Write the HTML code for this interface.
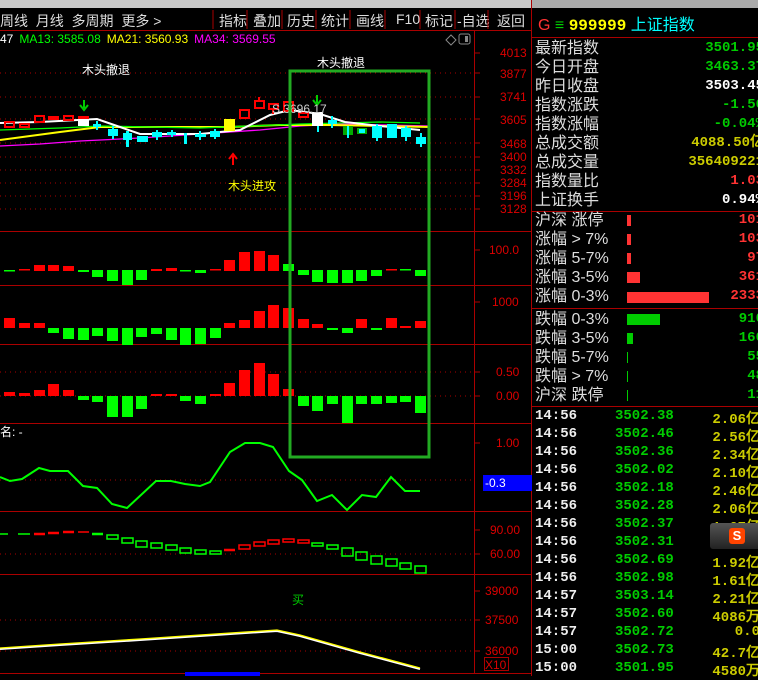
<!DOCTYPE html>
<html><head><meta charset="utf-8"><style>
body{margin:0;width:758px;height:676px;background:#000;overflow:hidden;font-family:"Liberation Sans","Noto Sans CJK SC",sans-serif;position:relative}
.a{position:absolute;white-space:nowrap}
.r{position:absolute;left:535px;width:223px;height:19px;font-size:16px;line-height:19px;color:#ddd;font-family:"Liberation Sans","WenQuanYi Zen Hei",sans-serif}
.r b{position:absolute;right:-6px;top:0;font-weight:bold;font-family:"Liberation Mono",monospace;font-size:14px}
.t{position:absolute;left:535px;width:223px;height:18px;font-size:14px;font-weight:bold;font-family:"Liberation Mono",monospace}
.t span{position:absolute}
</style></head><body>
<div class="a" style="left:0;top:0;width:758px;height:8px;background:#c8c8c8"></div>
<div class="a" style="left:0;top:8px;width:532px;height:22px;background:#000;border-bottom:1px solid #a00"></div>
<div class="a" style="left:0;top:11px;font-size:14px;color:#ddd">周线&nbsp;&nbsp;月线&nbsp;&nbsp;多周期&nbsp;&nbsp;更多 &gt;</div>
<div class="a" style="left:213px;top:11px;font-size:14px;color:#ddd;word-spacing:0">
<span style="position:absolute;left:6px">指标</span><span style="position:absolute;left:40px">叠加</span><span style="position:absolute;left:74px">历史</span><span style="position:absolute;left:108px">统计</span><span style="position:absolute;left:143px">画线</span><span style="position:absolute;left:183px">F10</span><span style="position:absolute;left:212px">标记</span><span style="position:absolute;left:244px">-自选</span><span style="position:absolute;left:284px">返回</span></div>
<svg class="a" style="left:0;top:0" width="532" height="676">
<g stroke="#a00" stroke-width="1">
<line x1="213" y1="10" x2="213" y2="29"/><line x1="247" y1="10" x2="247" y2="29"/><line x1="282" y1="10" x2="282" y2="29"/><line x1="316" y1="10" x2="316" y2="29"/><line x1="350" y1="10" x2="350" y2="29"/><line x1="385" y1="10" x2="385" y2="29"/><line x1="420" y1="10" x2="420" y2="29"/><line x1="455" y1="10" x2="455" y2="29"/><line x1="488" y1="10" x2="488" y2="29"/>
<line x1="474.5" y1="30" x2="474.5" y2="673"/>
<line x1="0" y1="231.5" x2="532" y2="231.5"/><line x1="0" y1="285.5" x2="532" y2="285.5"/><line x1="0" y1="344.5" x2="532" y2="344.5"/><line x1="0" y1="423.5" x2="532" y2="423.5"/><line x1="0" y1="511.5" x2="532" y2="511.5"/><line x1="0" y1="574.5" x2="532" y2="574.5"/><line x1="0" y1="673.5" x2="532" y2="673.5"/>
<line x1="531.5" y1="0" x2="531.5" y2="676"/>
</g>
<g stroke="#a00" stroke-dasharray="1 4">
<line x1="0" y1="73" x2="474" y2="73"/><line x1="0" y1="97" x2="474" y2="97"/><line x1="0" y1="119" x2="474" y2="119"/><line x1="0" y1="143" x2="474" y2="143"/><line x1="0" y1="157" x2="474" y2="157"/><line x1="0" y1="170" x2="474" y2="170"/><line x1="0" y1="183" x2="474" y2="183"/><line x1="0" y1="196" x2="474" y2="196"/><line x1="0" y1="209" x2="474" y2="209"/>
<line x1="0" y1="372" x2="474" y2="372"/><line x1="0" y1="396" x2="474" y2="396"/><line x1="0" y1="480" x2="474" y2="480"/><line x1="0" y1="554" x2="474" y2="554"/><line x1="0" y1="620" x2="474" y2="620"/><line x1="0" y1="651" x2="474" y2="651"/>
</g>
<g stroke="#a00"><line x1="474" y1="53" x2="480" y2="53"/><line x1="474" y1="73" x2="480" y2="73"/><line x1="474" y1="97" x2="480" y2="97"/><line x1="474" y1="119" x2="480" y2="119"/><line x1="474" y1="143" x2="480" y2="143"/><line x1="474" y1="157" x2="480" y2="157"/><line x1="474" y1="170" x2="480" y2="170"/><line x1="474" y1="183" x2="480" y2="183"/><line x1="474" y1="196" x2="480" y2="196"/><line x1="474" y1="209" x2="480" y2="209"/><line x1="474" y1="250" x2="480" y2="250"/><line x1="474" y1="302" x2="480" y2="302"/><line x1="474" y1="372" x2="480" y2="372"/><line x1="474" y1="396" x2="480" y2="396"/><line x1="474" y1="443" x2="480" y2="443"/><line x1="474" y1="530" x2="480" y2="530"/><line x1="474" y1="554" x2="480" y2="554"/><line x1="474" y1="591" x2="480" y2="591"/><line x1="474" y1="620" x2="480" y2="620"/><line x1="474" y1="651" x2="480" y2="651"/></g>
<g fill="#d00" font-family="Liberation Sans,sans-serif" font-size="12">
<text x="500" y="57">4013</text><text x="500" y="78">3877</text><text x="500" y="101">3741</text><text x="500" y="124">3605</text><text x="500" y="148">3468</text><text x="500" y="161">3400</text><text x="500" y="174">3332</text><text x="500" y="187">3284</text><text x="500" y="200">3196</text><text x="500" y="213">3128</text>
<text x="489" y="254">100.0</text><text x="492" y="306">1000</text><text x="496" y="376">0.50</text><text x="496" y="400">0.00</text><text x="496" y="447">1.00</text><text x="490" y="534">90.00</text><text x="490" y="558">60.00</text><text x="485" y="595">39000</text><text x="485" y="624">37500</text><text x="485" y="655">36000</text>
</g>
<rect x="483" y="475" width="49" height="16" fill="#0000ff"/><text x="485" y="487" fill="#fff" font-size="12" font-family="Liberation Sans">-0.3</text>
<rect x="484.5" y="657.5" width="24" height="13" fill="none" stroke="#a00"/><text x="485" y="669" fill="#d00" font-size="12" font-family="Liberation Sans">X10</text>
<rect x="185" y="672" width="75" height="4" fill="#00f"/>
<text x="0" y="43" font-size="12" font-family="Liberation Sans"><tspan fill="#fff">47</tspan><tspan fill="#0f0" dx="6">MA13: 3585.08</tspan><tspan fill="#ff0" dx="6">MA21: 3560.93</tspan><tspan fill="#f0f" dx="6">MA34: 3569.55</tspan></text>
<path d="M446 40 l5 -5 l5 5 l-5 5z" fill="none" stroke="#888"/><rect x="459" y="34" width="11" height="10" rx="2" fill="none" stroke="#888"/><rect x="465" y="36" width="3" height="6" fill="#888"/>
<polyline points="0,146 40,144 80,141 140,138 200,134 260,130 300,126 340,124 430,126" fill="none" stroke="#f0f" stroke-width="1.3"/>
<polyline points="0,140 30,136 60,132 100,127 150,127 230,127 280,125 330,125 430,127" fill="none" stroke="#ff0" stroke-width="2"/>
<polyline points="0,130 60,128 100,126 200,128 300,124 380,122 420,123" fill="none" stroke="#0f0" stroke-width="1.3"/>
<polyline points="0,123 40,122 97,119 120,127 140,134 200,134 240,130 270,115 290,110 320,114 345,122 380,126 420,130" fill="none" stroke="#fff" stroke-width="2"/>
<g stroke="#f00" stroke-width="2" fill="none">
<rect x="5" y="122" width="9" height="5"/><rect x="20" y="124" width="9" height="3"/><rect x="35" y="116" width="9" height="6"/><rect x="49" y="117" width="9" height="2"/><rect x="64" y="116" width="9" height="4"/><rect x="240" y="110" width="9" height="8"/><rect x="255" y="101" width="9" height="7"/><rect x="269" y="104" width="9" height="5"/><rect x="284" y="102" width="9" height="9"/><rect x="299" y="113" width="9" height="4"/>
<line x1="259" y1="97" x2="259" y2="101"/><line x1="273" y1="109" x2="273" y2="114"/>
</g>
<rect x="78" y="116" width="11" height="10" fill="#fff"/><rect x="78" y="116" width="11" height="3" fill="#f00"/>
<rect x="312" y="112" width="11" height="14" fill="#fff"/><rect x="317" y="126" width="2" height="6" fill="#0ff"/>
<rect x="224" y="119" width="11" height="12" fill="#ff0"/>
<g fill="#0ff">
<rect x="93" y="124" width="8" height="3"/><rect x="96" y="121" width="2" height="9"/>
<rect x="108" y="129" width="10" height="7"/><rect x="112" y="126" width="2" height="13"/>
<rect x="123" y="133" width="9" height="7"/><rect x="126" y="131" width="3" height="16"/>
<rect x="137" y="136" width="11" height="6"/>
<rect x="152" y="132" width="10" height="5"/><rect x="156" y="130" width="2" height="10"/>
<rect x="167" y="132" width="9" height="3"/><rect x="171" y="130" width="2" height="7"/>
<rect x="184" y="133" width="3" height="11"/>
<rect x="195" y="134" width="11" height="3"/><rect x="199" y="131" width="2" height="9"/>
<rect x="210" y="131" width="10" height="6"/><rect x="214" y="129" width="2" height="10"/>
<rect x="328" y="120" width="9" height="4"/><rect x="331" y="116" width="2" height="12"/>
<rect x="343" y="126" width="10" height="9" fill="#0a0"/><rect x="347" y="126" width="2" height="12"/>
<rect x="357" y="128" width="10" height="6" fill="#0a0"/><rect x="359" y="129" width="6" height="4"/>
<rect x="372" y="126" width="10" height="12"/><rect x="376" y="124" width="2" height="17"/>
<rect x="387" y="124" width="10" height="14"/>
<rect x="401" y="128" width="10" height="9"/><rect x="405" y="126" width="2" height="15"/>
<rect x="416" y="137" width="10" height="7"/><rect x="420" y="133" width="2" height="14"/>
</g>
<path d="M84 100 v8 M80 105 l4 5 l4 -5" stroke="#0c0" stroke-width="2" fill="none"/>
<path d="M317 95 v8 M313 100 l4 5 l4 -5" stroke="#0c0" stroke-width="2" fill="none"/>
<path d="M233 165 v-9 M229 159 l4 -5 l4 5" stroke="#f00" stroke-width="2" fill="none"/>
<g font-size="12" font-family="Liberation Sans,WenQuanYi Zen Hei,sans-serif">
<text x="82" y="74" fill="#fff">木头撤退</text><text x="317" y="67" fill="#fff">木头撤退</text><text x="228" y="190" fill="#ff0">木头进攻</text><text x="272" y="113" fill="#ccc">S 3696.17</text>
<text x="0" y="436" fill="#fff">名: -</text><text x="292" y="604" fill="#0c0">买</text>
</g>
<g fill="#f00">
<rect x="19" y="269" width="11" height="1.5"/><rect x="34" y="265" width="11" height="6"/><rect x="48" y="265" width="11" height="6"/><rect x="63" y="266" width="11" height="5"/><rect x="151" y="269" width="11" height="2"/><rect x="166" y="268" width="11" height="3"/><rect x="210" y="269" width="11" height="1.5"/><rect x="224" y="260" width="11" height="11"/><rect x="239" y="252" width="11" height="19"/><rect x="254" y="251" width="11" height="20"/><rect x="268" y="255" width="11" height="16"/><rect x="386" y="269" width="11" height="1.5"/>
</g>
<g fill="#0f0">
<rect x="4" y="270" width="11" height="1.5"/><rect x="78" y="270" width="11" height="2"/><rect x="92" y="270" width="11" height="7"/><rect x="107" y="270" width="11" height="11"/><rect x="122" y="270" width="11" height="15"/><rect x="136" y="270" width="11" height="10"/><rect x="180" y="270" width="11" height="1.5"/><rect x="195" y="270" width="11" height="3"/><rect x="283" y="264" width="11" height="7"/><rect x="298" y="270" width="11" height="5"/><rect x="312" y="270" width="11" height="12"/><rect x="327" y="270" width="11" height="13"/><rect x="342" y="270" width="11" height="13"/><rect x="356" y="270" width="11" height="11"/><rect x="371" y="270" width="11" height="6"/><rect x="400" y="269" width="11" height="1.5"/><rect x="415" y="270" width="11" height="6"/>
</g>
<g fill="#f00">
<rect x="4" y="318" width="11" height="10"/><rect x="19" y="323" width="11" height="5"/><rect x="34" y="323" width="11" height="5"/><rect x="224" y="323" width="11" height="5"/><rect x="239" y="320" width="11" height="8"/><rect x="254" y="311" width="11" height="17"/><rect x="268" y="305" width="11" height="23"/><rect x="283" y="308" width="11" height="20"/><rect x="298" y="319" width="11" height="9"/><rect x="312" y="324" width="11" height="4"/><rect x="356" y="319" width="11" height="9"/><rect x="386" y="318" width="11" height="10"/><rect x="400" y="326" width="11" height="2"/><rect x="415" y="321" width="11" height="7"/>
</g>
<g fill="#0f0">
<rect x="48" y="328" width="11" height="5"/><rect x="63" y="328" width="11" height="11"/><rect x="78" y="328" width="11" height="12"/><rect x="92" y="328" width="11" height="8"/><rect x="107" y="328" width="11" height="13"/><rect x="122" y="328" width="11" height="17"/><rect x="136" y="328" width="11" height="9"/><rect x="151" y="328" width="11" height="6"/><rect x="166" y="328" width="11" height="12"/><rect x="180" y="328" width="11" height="17"/><rect x="195" y="328" width="11" height="16"/><rect x="210" y="328" width="11" height="10"/><rect x="327" y="328" width="11" height="2"/><rect x="342" y="328" width="11" height="5"/><rect x="371" y="328" width="11" height="2"/>
</g>
<g fill="#f00">
<rect x="4" y="392" width="11" height="4"/><rect x="19" y="393" width="11" height="3"/><rect x="34" y="390" width="11" height="6"/><rect x="48" y="384" width="11" height="12"/><rect x="63" y="390" width="11" height="6"/><rect x="151" y="394" width="11" height="2"/><rect x="166" y="394" width="11" height="2"/><rect x="210" y="394" width="11" height="2"/><rect x="224" y="383" width="11" height="13"/><rect x="239" y="370" width="11" height="26"/><rect x="254" y="363" width="11" height="33"/><rect x="268" y="374" width="11" height="22"/><rect x="283" y="389" width="11" height="7"/>
</g>
<g fill="#0f0">
<rect x="78" y="396" width="11" height="4"/><rect x="92" y="396" width="11" height="6"/><rect x="107" y="396" width="11" height="21"/><rect x="122" y="396" width="11" height="21"/><rect x="136" y="396" width="11" height="13"/><rect x="180" y="396" width="11" height="5"/><rect x="195" y="396" width="11" height="8"/><rect x="298" y="396" width="11" height="10"/><rect x="312" y="396" width="11" height="15"/><rect x="327" y="396" width="11" height="8"/><rect x="342" y="396" width="11" height="27"/><rect x="356" y="396" width="11" height="8"/><rect x="371" y="396" width="11" height="8"/><rect x="386" y="396" width="11" height="7"/><rect x="400" y="396" width="11" height="6"/><rect x="415" y="396" width="11" height="17"/>
</g>
<polyline points="0,477 10,481 22,479 39,468 50,471 68,471 83,486 97,488 112,504 127,508 156,481 171,481 185,484 200,486 210,482 230,452 245,443 260,443 273,447 289,471 302,480 317,501 332,495 347,510 362,495 376,497 391,477 405,491 420,491" fill="none" stroke="#0f0" stroke-width="2"/>
<g stroke-width="1.5" fill="none">
<g stroke="#0f0"><line x1="0" y1="534" x2="8" y2="534"/><line x1="18" y1="534" x2="30" y2="534"/><line x1="92" y1="534" x2="103" y2="534" stroke-width="2.5"/>
<rect x="107" y="535" width="11" height="4"/><rect x="122" y="538" width="11" height="5"/><rect x="136" y="541" width="11" height="6"/><rect x="151" y="543" width="11" height="5"/><rect x="166" y="545" width="11" height="5"/><rect x="180" y="548" width="11" height="5"/><rect x="195" y="550" width="11" height="4"/><rect x="210" y="551" width="11" height="3"/>
<rect x="312" y="543" width="11" height="3"/><rect x="327" y="545" width="11" height="4"/><rect x="342" y="548" width="11" height="8"/><rect x="356" y="552" width="11" height="8"/><rect x="371" y="556" width="11" height="8"/><rect x="386" y="559" width="11" height="7"/><rect x="400" y="563" width="11" height="6"/><rect x="415" y="566" width="11" height="7"/></g>
<g stroke="#f00"><line x1="34" y1="534" x2="45" y2="534" stroke-width="2.5"/><line x1="48" y1="533" x2="59" y2="533" stroke-width="2.5"/><line x1="63" y1="532" x2="74" y2="532" stroke-width="2.5"/><line x1="78" y1="532" x2="89" y2="532"/><line x1="224" y1="550" x2="235" y2="550" stroke-width="2.5"/>
<rect x="239" y="545" width="11" height="4"/><rect x="254" y="542" width="11" height="4"/><rect x="268" y="540" width="11" height="4"/><rect x="283" y="539" width="11" height="3"/><rect x="298" y="540" width="11" height="3"/></g>
</g>
<polyline points="0,649 60,645 140,640 200,636 277,631 300,636 360,653 420,669" fill="none" stroke="#fff" stroke-width="2"/>
<polyline points="0,648 60,644 140,639 200,635 277,630 300,635 360,652 420,668" fill="none" stroke="#ff0" stroke-width="1.3"/>
<rect x="290" y="71" width="139" height="386" fill="none" stroke="#22aa22" stroke-width="3"/>
</svg>
<div class="a" style="left:532px;top:0;width:226px;height:8px;background:#aaa"></div>
<div class="a" style="left:532px;top:8px;width:226px;height:29px;background:#000;border-bottom:1px solid #a00"></div>
<div class="a" style="left:538px;top:11px;font-size:16px"><span style="color:#f33;font-family:'Liberation Sans'">G</span> <span style="color:#0c0">≡</span> <b style="color:#ff0;font-family:'Liberation Mono'">999999</b> <span style="color:#0ff">上证指数</span></div>
<div class="r" style="top:39px">最新指数<b style="color:#0c0">3501.95</b></div>
<div class="r" style="top:58px">今日开盘<b style="color:#0c0">3463.37</b></div>
<div class="r" style="top:77px">昨日收盘<b style="color:#fff">3503.45</b></div>
<div class="r" style="top:96px">指数涨跌<b style="color:#0c0">-1.50</b></div>
<div class="r" style="top:115px">指数涨幅<b style="color:#0c0">-0.04%</b></div>
<div class="r" style="top:134px">总成交额<b style="color:#cc0">4088.50亿</b></div>
<div class="r" style="top:153px">总成交量<b style="color:#cc0">356409221</b></div>
<div class="r" style="top:172px">指数量比<b style="color:#f33">1.03</b></div>
<div class="r" style="top:191px">上证换手<b style="color:#fff">0.94%</b></div>
<div class="a" style="left:532px;top:211px;width:226px;height:1px;background:#a00"></div>
<div class="r" style="top:211px">沪深 涨停<b style="color:#f33">101</b></div>
<div class="r" style="top:230px">涨幅 &gt; 7%<b style="color:#f33">103</b></div>
<div class="r" style="top:249px">涨幅 5-7%<b style="color:#f33">97</b></div>
<div class="r" style="top:268px">涨幅 3-5%<b style="color:#f33">361</b></div>
<div class="r" style="top:287px">涨幅 0-3%<b style="color:#f33">2333</b></div>
<div class="a" style="left:532px;top:308px;width:226px;height:1px;background:#a00"></div>
<div class="r" style="top:310px">跌幅 0-3%<b style="color:#0c0">910</b></div>
<div class="r" style="top:329px">跌幅 3-5%<b style="color:#0c0">160</b></div>
<div class="r" style="top:348px">跌幅 5-7%<b style="color:#0c0">55</b></div>
<div class="r" style="top:367px">跌幅 &gt; 7%<b style="color:#0c0">48</b></div>
<div class="r" style="top:386px">沪深 跌停<b style="color:#0c0">11</b></div>
<div class="a" style="left:532px;top:406px;width:226px;height:1px;background:#a00"></div>
<div class="a" style="left:627px;top:215px;width:4px;height:11px;background:#f33"></div>
<div class="a" style="left:627px;top:234px;width:4px;height:11px;background:#f33"></div>
<div class="a" style="left:627px;top:253px;width:4px;height:11px;background:#f33"></div>
<div class="a" style="left:627px;top:272px;width:13px;height:11px;background:#f33"></div>
<div class="a" style="left:627px;top:292px;width:82px;height:11px;background:#f33"></div>
<div class="a" style="left:627px;top:314px;width:33px;height:11px;background:#0c0"></div>
<div class="a" style="left:627px;top:333px;width:6px;height:11px;background:#0c0"></div>
<div class="a" style="left:627px;top:352px;width:1px;height:11px;background:#0c0"></div>
<div class="a" style="left:627px;top:371px;width:1px;height:11px;background:#0c0"></div>
<div class="a" style="left:627px;top:390px;width:1px;height:11px;background:#0c0"></div>
<div class="t" style="top:408px"><span style="left:0;color:#eee">14:56</span><span style="left:80px;color:#0c0">3502.38</span><span style="right:-2px;color:#cc0">2.06亿</span></div>
<div class="t" style="top:426px"><span style="left:0;color:#eee">14:56</span><span style="left:80px;color:#0c0">3502.46</span><span style="right:-2px;color:#cc0">2.56亿</span></div>
<div class="t" style="top:444px"><span style="left:0;color:#eee">14:56</span><span style="left:80px;color:#0c0">3502.36</span><span style="right:-2px;color:#cc0">2.34亿</span></div>
<div class="t" style="top:462px"><span style="left:0;color:#eee">14:56</span><span style="left:80px;color:#0c0">3502.02</span><span style="right:-2px;color:#cc0">2.10亿</span></div>
<div class="t" style="top:480px"><span style="left:0;color:#eee">14:56</span><span style="left:80px;color:#0c0">3502.18</span><span style="right:-2px;color:#cc0">2.46亿</span></div>
<div class="t" style="top:498px"><span style="left:0;color:#eee">14:56</span><span style="left:80px;color:#0c0">3502.28</span><span style="right:-2px;color:#cc0">2.06亿</span></div>
<div class="t" style="top:516px"><span style="left:0;color:#eee">14:56</span><span style="left:80px;color:#0c0">3502.37</span><span style="right:-2px;color:#cc0">1.67亿</span></div>
<div class="t" style="top:534px"><span style="left:0;color:#eee">14:56</span><span style="left:80px;color:#0c0">3502.31</span></div>
<div class="t" style="top:552px"><span style="left:0;color:#eee">14:56</span><span style="left:80px;color:#0c0">3502.69</span><span style="right:-2px;color:#cc0">1.92亿</span></div>
<div class="t" style="top:570px"><span style="left:0;color:#eee">14:56</span><span style="left:80px;color:#0c0">3502.98</span><span style="right:-2px;color:#cc0">1.61亿</span></div>
<div class="t" style="top:588px"><span style="left:0;color:#eee">14:57</span><span style="left:80px;color:#0c0">3503.14</span><span style="right:-2px;color:#cc0">2.21亿</span></div>
<div class="t" style="top:606px"><span style="left:0;color:#eee">14:57</span><span style="left:80px;color:#0c0">3502.60</span><span style="right:-2px;color:#cc0">4086万</span></div>
<div class="t" style="top:624px"><span style="left:0;color:#eee">14:57</span><span style="left:80px;color:#0c0">3502.72</span><span style="right:-2px;color:#cc0">0.0</span></div>
<div class="t" style="top:642px"><span style="left:0;color:#eee">15:00</span><span style="left:80px;color:#0c0">3502.73</span><span style="right:-2px;color:#cc0">42.7亿</span></div>
<div class="t" style="top:660px"><span style="left:0;color:#eee">15:00</span><span style="left:80px;color:#0c0">3501.95</span><span style="right:-2px;color:#cc0">4580万</span></div>
<div class="a" style="left:710px;top:523px;width:48px;height:26px;background:linear-gradient(#555,#222);border-radius:3px 0 0 3px"></div>
<div class="a" style="left:729px;top:528px;width:16px;height:16px;background:#f40;border-radius:3px;color:#fff;font-size:13px;font-weight:bold;text-align:center;line-height:16px">S</div>
</body></html>
